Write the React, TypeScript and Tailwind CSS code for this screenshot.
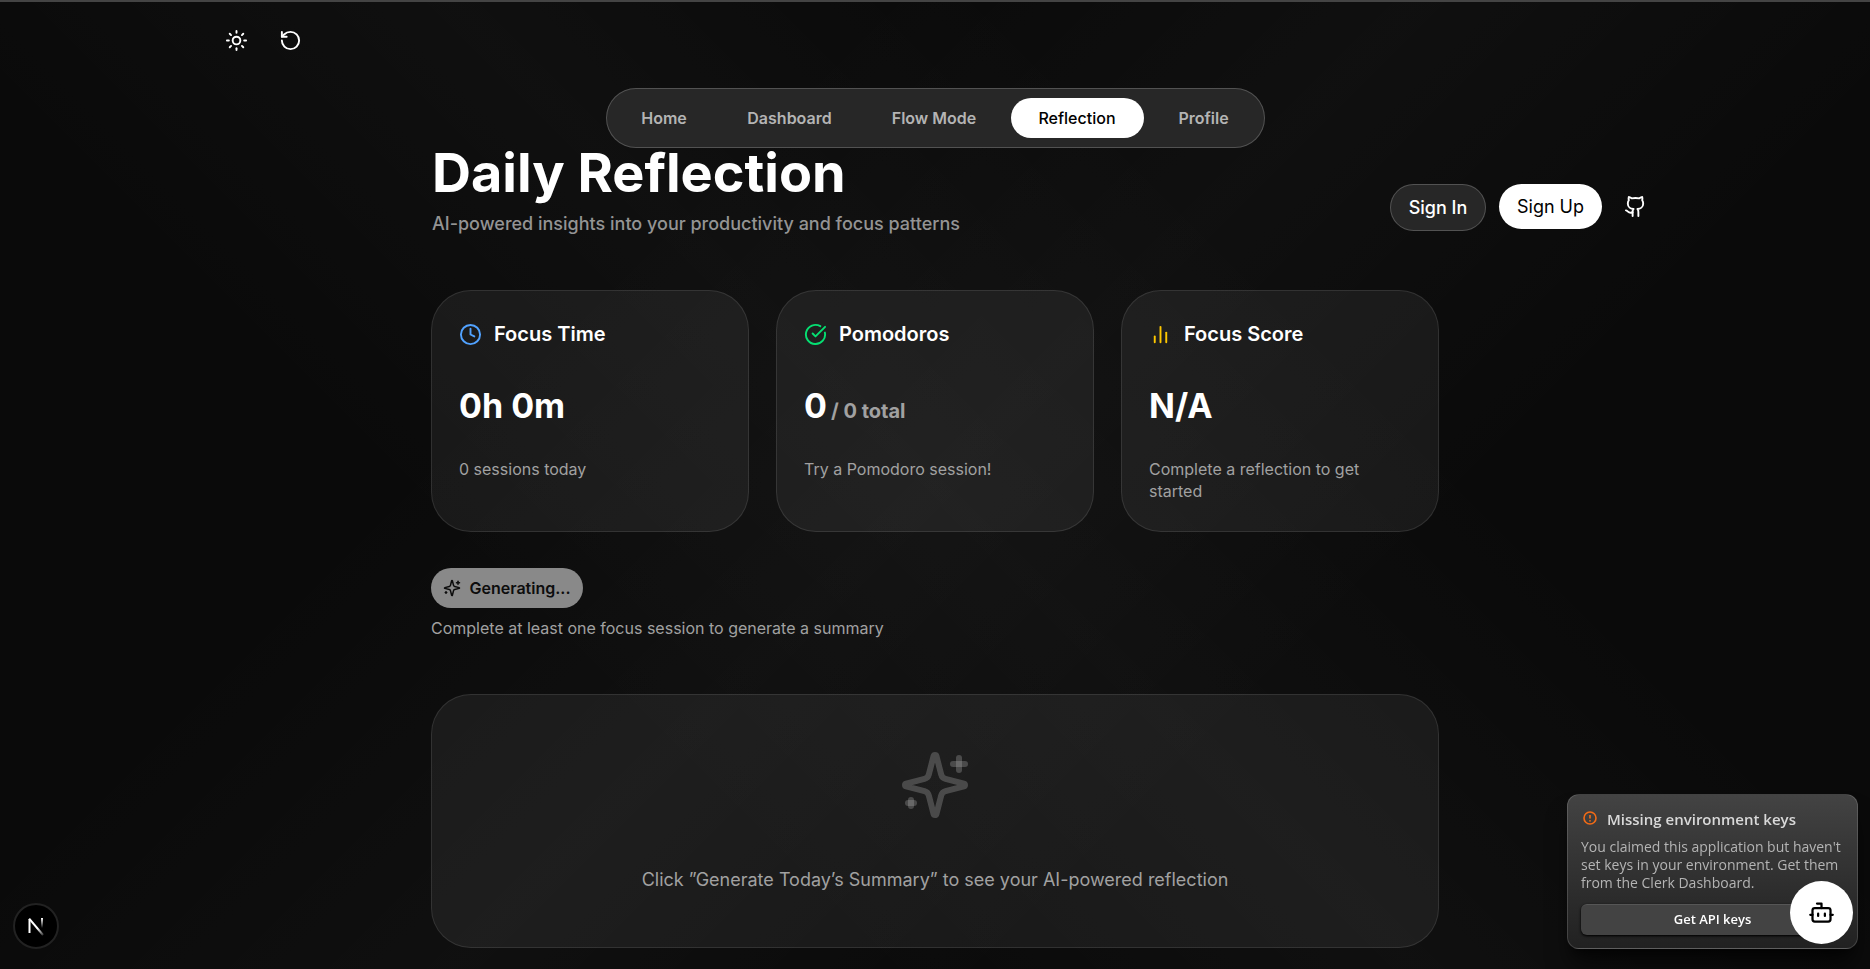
import type { ReactNode } from "react";
import { Bot, CircleCheckBig, Clock, Github, RotateCcw, Sun } from "lucide-react";

function Sparkles({ className }: { className?: string }) {
  return (
    <svg
      viewBox="0 0 24 24"
      fill="none"
      stroke="currentColor"
      strokeWidth="2"
      strokeLinecap="round"
      strokeLinejoin="round"
      className={className}
      aria-hidden="true"
    >
      <path d="M9.937 15.5A2 2 0 0 0 8.5 14.063l-6.135-1.582a.5.5 0 0 1 0-.962L8.5 9.936A2 2 0 0 0 9.937 8.5l1.582-6.135a.5.5 0 0 1 .963 0L14.063 8.5A2 2 0 0 0 15.5 9.937l6.135 1.581a.5.5 0 0 1 0 .964L15.5 14.063a2 2 0 0 0-1.437 1.437l-1.582 6.135a.5.5 0 0 1-.963 0z" />
      <path d="M20 3v4" />
      <path d="M22 5h-4" />
      <path d="M4 17v2" />
      <path d="M5 18H3" />
    </svg>
  );
}

function Bars({ className }: { className?: string }) {
  return (
    <svg
      viewBox="0 0 24 24"
      fill="none"
      stroke="currentColor"
      strokeWidth="2"
      strokeLinecap="round"
      className={className}
      aria-hidden="true"
    >
      <path d="M18 20V10" />
      <path d="M12 20V4" />
      <path d="M6 20v-6" />
    </svg>
  );
}

const tabs = [
  { label: "Home", width: "w-[97px]" },
  { label: "Dashboard", width: "w-[136px]" },
  { label: "Flow Mode", width: "w-[135px]" },
  { label: "Reflection", width: "w-[133px]", active: true },
  { label: "Profile", width: "w-[102px]" },
];

function StatCard({
  icon,
  title,
  value,
  suffix,
  note,
}: {
  icon: ReactNode;
  title: string;
  value: string;
  suffix?: string;
  note: string;
}) {
  return (
    <article className="rounded-[40px] border border-white/10 bg-white/[0.06] px-[27px] pt-[29px] pb-[29px]">
      <h2 className="flex items-center gap-3 text-[20px] leading-7 font-semibold text-white">
        {icon}
        {title}
      </h2>
      <p className="mt-[36px] text-[34px] leading-[44px] font-bold text-white">
        {value}
        {suffix && <span className="ml-1 text-[20px] leading-none text-[#a1a1a1]">{suffix}</span>}
      </p>
      <p className="mt-[30px] text-[16px] leading-[22px] text-[#a1a1a1]">{note}</p>
    </article>
  );
}

export default function App() {
  return (
    <div className="min-h-screen border-t-2 border-[#444] bg-[#0a0a0a] bg-[linear-gradient(45deg,transparent_30%,rgba(255,255,255,0.024)_50%,transparent_70%),linear-gradient(315deg,transparent_30%,rgba(255,255,255,0.024)_50%,transparent_70%)] pb-5 font-['Inter','Liberation_Sans',sans-serif] text-white">
      <header className="mx-auto max-w-[1440px]">
        <div className="flex h-[76px] items-center gap-[18px]">
          <button aria-label="Toggle theme" className="grid size-9 place-items-center rounded-full">
            <span className="grid place-items-center pl-[6px]">
              <Sun size={23} />
            </span>
          </button>
          <button aria-label="Reset" className="grid size-9 place-items-center rounded-full">
            <span className="grid place-items-center pl-[6px]">
              <RotateCcw size={23} />
            </span>
          </button>
        </div>
        <nav className="mx-auto mt-[10px] flex w-fit gap-[9px] rounded-full border border-white/20 bg-[#272727] p-[9px]">
          {tabs.map((t) => (
            <a
              key={t.label}
              href="#"
              aria-current={t.active ? "page" : undefined}
              className={
                t.width +
                " flex h-10 items-center justify-center rounded-full text-[16px] whitespace-nowrap " +
                (t.active ? "bg-white font-medium text-black" : "font-semibold text-[#b4b4b4]")
              }
            >
              {t.label}
            </a>
          ))}
        </nav>
      </header>

      <div className="mx-auto flex max-w-[1440px] items-start justify-between xl:pl-[217px]">
        <div>
          <h1 className="text-[54px] leading-[50px] font-bold">Daily Reflection</h1>
          <p className="mt-3 text-[18px] leading-7 font-medium text-[#949494]">
            AI-powered insights into your productivity and focus patterns
          </p>
        </div>
        <div className="flex items-start gap-[13px] pt-9">
          <button className="h-[47px] w-24 rounded-full border border-white/20 bg-[#272727] text-[18px] font-medium">
            Sign In
          </button>
          <button className="h-[45px] w-[103px] rounded-full bg-white text-[18px] text-black">Sign Up</button>
          <a href="#" aria-label="GitHub" className="grid h-[45px] w-10 place-items-center">
            <Github size={23} />
          </a>
        </div>
      </div>

      <main className="mx-auto max-w-[1008px] pt-[52px]">
        <section className="grid grid-cols-3 gap-[27px]">
          <StatCard
            icon={<Clock size={23} className="text-[#51a2ff]" />}
            title="Focus Time"
            value="0h 0m"
            note="0 sessions today"
          />
          <StatCard
            icon={<CircleCheckBig size={23} className="text-[#05df72]" />}
            title="Pomodoros"
            value="0"
            suffix="/ 0 total"
            note="Try a Pomodoro session!"
          />
          <StatCard
            icon={<Bars className="size-[23px] text-[#fdc700]" />}
            title="Focus Score"
            value="N/A"
            note="Complete a reflection to get started"
          />
        </section>

        <section className="mt-9">
          <button
            disabled
            className="flex h-10 w-[152px] items-center justify-center gap-2 rounded-full bg-[#898989] text-[16px] font-semibold text-[#0d0d0d]"
          >
            <Sparkles className="size-[18px]" />
            Generating...
          </button>
          <p className="mt-2 text-[16px] leading-6 text-[#a1a1a1]">
            Complete at least one focus session to generate a summary
          </p>
        </section>

        <section className="mt-[54px] flex flex-col items-center rounded-[40px] border border-white/10 bg-white/[0.06] px-[54px] pt-[54px] pb-[53px]">
          <Sparkles className="size-[72px] text-[#a1a1a1]/35" />
          <p className="mt-[45px] text-[18px] leading-7 text-[#a1a1a1]">
            Click ”Generate Today’s Summary” to see your AI-powered reflection
          </p>
        </section>
      </main>

      <aside className="fixed right-3 bottom-5 w-[291px] rounded-xl border border-white/15 bg-linear-to-b from-[#434343] to-[#212121] px-[13px] pt-[13px] pb-[13px] font-['Open_Sans','Noto_Sans',sans-serif] shadow-xl shadow-black/60">
        <h2 className="flex items-center gap-2 text-[15px] leading-[22px] font-semibold text-[#d9d9d9]">
          <svg viewBox="0 0 16 16" fill="none" className="ml-[2px] size-4" aria-hidden="true">
            <circle cx="7" cy="7" r="6" stroke="#f36b16" strokeWidth="1.6" />
            <path d="M7 4v3.6" stroke="#f36b16" strokeWidth="1.6" />
            <circle cx="7" cy="9.8" r="0.9" fill="#f36b16" />
          </svg>
          Missing environment keys
        </h2>
        <p className="mt-2 text-[14px] leading-[18px] text-[#b4b4b4]">
          You claimed this application but haven't set keys in your environment. Get them from the Clerk Dashboard.
        </p>
        <button className="mt-3 h-[31px] w-full rounded-md border-t border-white/10 bg-[#434343] text-[13px] font-semibold text-white shadow-sm shadow-black">
          Get API keys
        </button>
      </aside>

      <button
        aria-label="Open assistant"
        className="fixed right-[17px] bottom-[25px] grid size-[63px] place-items-center rounded-full bg-white text-black"
      >
        <Bot size={27} />
      </button>

      <button
        aria-label="Open developer tools"
        className="fixed bottom-5 left-[13px] grid size-[46px] place-items-center rounded-full border-2 border-[#222] bg-black"
      >
        <svg viewBox="0 0 40 40" fill="none" className="size-10" aria-hidden="true">
          <defs>
            <linearGradient id="diagonal" x1="22" y1="22" x2="28" y2="30" gradientUnits="userSpaceOnUse">
              <stop stopColor="#fff" />
              <stop offset="1" stopColor="#fff" stopOpacity="0.1" />
            </linearGradient>
            <linearGradient id="stem" x1="26" y1="12" x2="26" y2="22" gradientUnits="userSpaceOnUse">
              <stop stopColor="#fff" />
              <stop offset="1" stopColor="#fff" stopOpacity="0" />
            </linearGradient>
          </defs>
          <path d="M13.5 27V13" stroke="#fff" strokeWidth="2" />
          <path d="M13.2 12.6L27 29" stroke="url(#diagonal)" strokeWidth="2" />
          <path d="M26 12v10" stroke="url(#stem)" strokeWidth="2" />
        </svg>
      </button>
    </div>
  );
}
